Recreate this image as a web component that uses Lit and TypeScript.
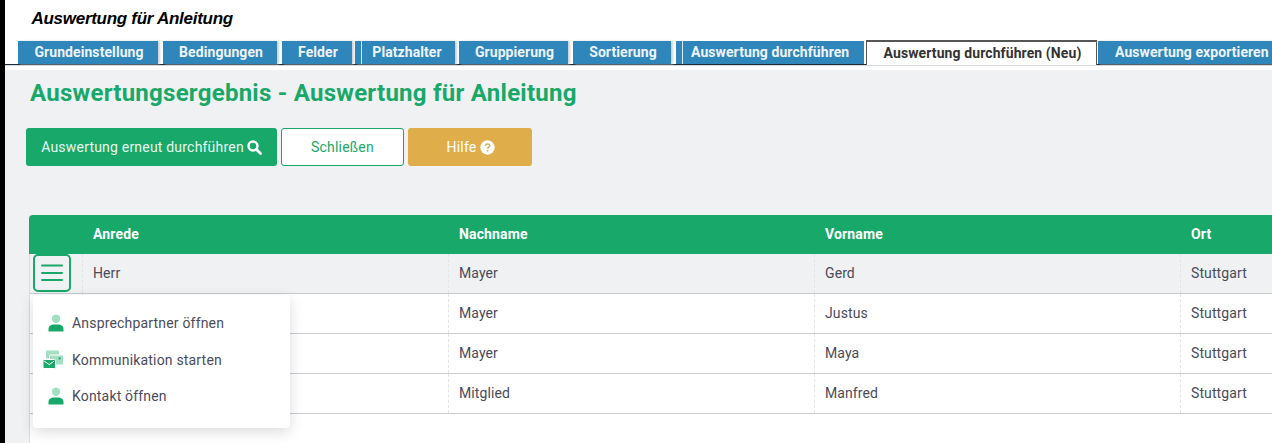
import { LitElement, html, css, svg } from "lit";
import { customElement } from "lit/decorators.js";

const person = svg`<circle cx="8" cy="4.8" r="4.2" fill="#a3dfc3"/><path d="M0.5 17.5v-2.6c0-2.8 2.4-4.4 5-4.4h5c2.6 0 5 1.6 5 4.4v2.6z" fill="#18a869"/>`;
const comm = svg`<rect x="3" y="0.5" width="13" height="8" rx="1" fill="#a3dfc3"/><rect x="6.5" y="5" width="14" height="10" rx="1" fill="#a3dfc3" stroke="#fff" stroke-width="1"/><rect x="15.6" y="7.4" width="2" height="2" fill="#18a869"/><rect x="0" y="9.5" width="12.5" height="9" rx="1" fill="#18a869" stroke="#fff" stroke-width="1"/><path d="M1.2 11l5 3.6 5-3.6" fill="none" stroke="#fff" stroke-width="1"/>`;

const rows = [
  ["Herr", "Mayer", "Gerd", "Stuttgart"],
  ["", "Mayer", "Justus", "Stuttgart"],
  ["", "Mayer", "Maya", "Stuttgart"],
  ["", "Mitglied", "Manfred", "Stuttgart"],
];
const tabs: [string, string][] = [
  ["Grundeinstellung", "t1"], ["Bedingungen", "t2"], ["Felder", "t3"], ["Platzhalter", "t4"],
  ["Gruppierung", "t5"], ["Sortierung", "t6"], ["Auswertung durchführen", "t7"],
];

@customElement("app-root")
export class AppRoot extends LitElement {
  static styles = css`
    :host { display: block; width: 1272px; height: 443px; overflow: hidden; font-family: Roboto, "Liberation Sans", sans-serif; background: #000; }
    .page { margin-left: 5px; height: 443px; background: #f0f1f3; display: flex; flex-direction: column; }
    .top { background: #fff; height: 70px; flex: none; }
    .app-title { font: italic bold 17px/1 "Liberation Sans", Arial, sans-serif; color: #000; padding: 10px 0 0 26.5px; height: 30px; box-sizing: border-box; letter-spacing: -0.28px; }
    .tabbar { height: 25px; display: flex; align-items: flex-end; padding-left: 13px; border-bottom: 1px solid #1d2b36; box-shadow: 0 1px 0 #d8dadc; box-sizing: border-box; white-space: nowrap; margin-top: 10px; }
    .tab { height: 23px; background: #2e86bb; color: #eef4f8; font: 700 14px/23px Roboto, sans-serif; letter-spacing: 0.08px; text-align: center; text-indent: 2px; flex: none; box-shadow: 2px 0 2px #cfd3d6; }
    .t1 { width: 140px; margin-right: 5px; }
    .t2 { width: 114px; margin-right: 5px; }
    .t3 { width: 70px; margin-right: 3px; }
    .t4 { margin-right: 4px; border-left: 6px solid #2e86bb; box-shadow: inset 1px 0 0 #dce8f0, 2px 0 2px #cfd3d6; width: 94px; text-indent: -2px; }
    .t5 { width: 109px; margin-right: 5px; }
    .t6 { width: 98px; margin-right: 5px; }
    .t7 { margin-right: 2px; box-shadow: inset 1px 0 0 #dce8f0; border-left: 6px solid #2e86bb; text-align: left; text-indent: 0; padding-left: 9px; box-sizing: content-box; width: 173px; }
    .active { width: 231px; height: 25px; margin-right: 1px; margin-bottom: -1px; padding-bottom: 1px; flex: none; box-sizing: border-box; background: #fff; color: #333; font: 700 14px/23px Roboto, sans-serif; letter-spacing: 0.1px; text-align: center; text-indent: 2px; border: 1px solid #555; border-bottom: 0; border-top-width: 2px; }
    .t8 { width: 180px; text-align: left; text-indent: 0; padding-left: 17px; box-sizing: border-box; }
    h1 { margin: 9px 0 0 25px; font: 700 24px/29px Roboto, sans-serif; color: #18a869; letter-spacing: 0.26px; height: 29px; }
    .btns { display: flex; gap: 4px; margin: 20px 0 0 21px; height: 38px; }
    .btn { height: 38px; box-sizing: border-box; border-radius: 3px; font: 400 14px/38px Roboto, sans-serif; letter-spacing: 0.2px; display: flex; align-items: center; justify-content: center; gap: 3px; }
    .b1 { width: 251px; background: #18a869; color: #e8f7f0; }
    .b2 { width: 123px; background: #fff; color: #18a869; border: 1px solid #18a869; }
    .b3 { width: 124px; background: #dfae4b; color: #fff; gap: 4px; padding-left: 2px; }
    .table { margin: 49px 0 0 24px; flex: 1; background: #fff; position: relative; border-left: 1px solid #d9dbde; }
    .grid { display: grid; grid-template-columns: 52px 366px 366px 366px 1fr; }
    .head { background: #18a869; color: #fff; font: 700 14px/39px Roboto, sans-serif; letter-spacing: 0.15px; height: 39px; border-radius: 4px 0 0 0; margin-left: -1px; padding-left: 1px; }
    .head > div { padding-left: 11px; }
    .row { height: 40px; box-sizing: border-box; border-bottom: 1px solid #c9cbd3; font: 400 14px/38px Roboto, sans-serif; letter-spacing: 0.1px; color: #4a4b5a; }
    .row.first { background: #f0f1f3; }
    .row > div { padding-left: 10px; height: 39px; border-left: 1px dashed #e2e4e8; }
    .row > div:first-child { border-left: 0; padding: 0; }
    .menu-btn { position: absolute; left: 3px; top: 39px; width: 38px; height: 38px; box-sizing: border-box; border: 2px solid #18a869; border-radius: 5px; background: #f0f1f3; display: flex; align-items: center; justify-content: center; }
    .popup { position: absolute; left: 3px; top: 80px; width: 257px; height: 133px; background: #fff; border-radius: 4px; box-shadow: 0 4px 14px rgba(0,0,0,.14); box-sizing: border-box; padding: 10px 0 0 0; }
    .item { height: 36.5px; display: flex; align-items: center; font: 400 14px Roboto, sans-serif; color: #4a4b5a; letter-spacing: 0.18px; }
    .ic { width: 39px; flex: none; display: flex; justify-content: center; padding-left: 7px; box-sizing: border-box; }
    .comm { margin-left: -5px; }
  `;

  render() {
    return html`<div class="page">
      <div class="top">
        <div class="app-title">Auswertung für Anleitung</div>
        <div class="tabbar">
          ${tabs.map(([t, c]) => html`<div class="tab ${c}">${t}</div>`)}
          <div class="active">Auswertung durchführen (Neu)</div>
          <div class="tab t8">Auswertung exportieren</div>
        </div>
      </div>
      <h1>Auswertungsergebnis - Auswertung für Anleitung</h1>
      <div class="btns">
        <div class="btn b1">Auswertung erneut durchführen
          <svg width="15" height="15" viewBox="0 0 15 15"><circle cx="6" cy="6" r="4.5" fill="none" stroke="#fff" stroke-width="2.4"/><path d="M9.5 9.5l4 4" stroke="#fff" stroke-width="2.8" stroke-linecap="round"/></svg>
        </div>
        <div class="btn b2">Schließen</div>
        <div class="btn b3">Hilfe
          <svg width="15" height="15" viewBox="0 0 15 15"><circle cx="7.5" cy="7.5" r="7.2" fill="#fff"/><path d="M5.4 5.8c0-1.2 1-1.9 2.2-1.9s2.1.7 2.1 1.8c0 1.5-2 1.5-2 3" fill="none" stroke="#dfae4b" stroke-width="1.5"/><rect x="6.8" y="9.9" width="1.6" height="1.6" fill="#dfae4b"/></svg>
        </div>
      </div>
      <div class="table">
        <div class="grid head"><div></div><div>Anrede</div><div>Nachname</div><div>Vorname</div><div>Ort</div></div>
        ${rows.map((r, i) => html`<div class="grid row ${i === 0 ? "first" : ""}"><div></div>${r.map((c) => html`<div>${c}</div>`)}</div>`)}
        <div class="menu-btn"><svg width="22" height="18" viewBox="0 0 22 18"><path d="M1 1.5h20M1 9h20M1 16h20" stroke="#18a869" stroke-width="2" stroke-linecap="round"/></svg></div>
        <div class="popup">
          <div class="item"><span class="ic"><svg width="16" height="18" viewBox="0 0 16 18">${person}</svg></span>Ansprechpartner öffnen</div>
          <div class="item"><span class="ic"><svg class="comm" width="21" height="19" viewBox="0 0 21 19">${comm}</svg></span>Kommunikation starten</div>
          <div class="item"><span class="ic"><svg width="16" height="18" viewBox="0 0 16 18">${person}</svg></span>Kontakt öffnen</div>
        </div>
      </div>
    </div>`;
  }
}
